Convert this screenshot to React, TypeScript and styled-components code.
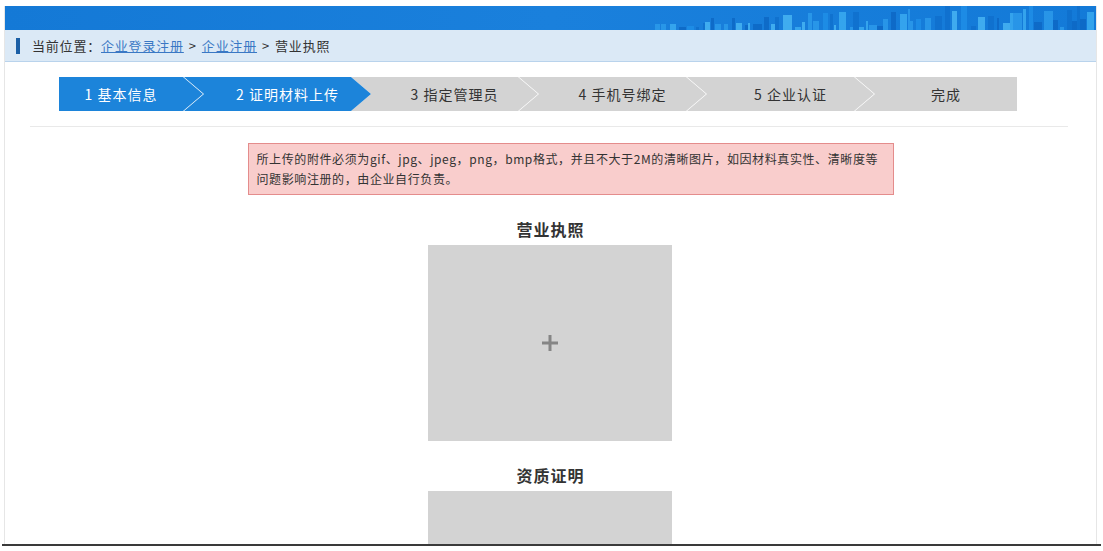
import * as React from "react";
import styled, { createGlobalStyle } from "styled-components";

const GlobalStyle = createGlobalStyle`
    html, body {
        margin: 0;
        padding: 0;
        background: #fff;
        font-family: "Noto Sans CJK SC", "Noto Sans", "Liberation Sans", sans-serif;
        color: #333;
        overflow: hidden;
    }
`;

const Page = styled.div`
    margin: 6px 0 0 4px;
    width: 1093px;
    height: 560px;
    border-left: 1px solid #e6e6e6;
    border-right: 1px solid #e6e6e6;
    box-sizing: border-box;
`;

const Banner = styled.div`
    height: 24px;
    background: linear-gradient(90deg, #1479d6 0%, #1a80dc 50%, #137ad8 100%);
    overflow: hidden;
    & > svg {
        display: block;
    }
`;

const Crumbs = styled.div`
    height: 31px;
    background: #dbe9f6;
    border-bottom: 1px solid #b9d3ec;
    display: flex;
    align-items: center;
    padding-left: 11px;
    font-size: 13px;
    letter-spacing: 0.8px;
    color: #333;
`;

const Marker = styled.span`
    width: 4px;
    height: 16px;
    background: #1b5fa6;
    margin-right: 12px;
`;

const CrumbLink = styled.a`
    color: #3a78c4;
    text-decoration: underline;
    cursor: pointer;
`;

const Sep = styled.span`
    margin: 0 5px;
`;

const Steps = styled.div`
    display: flex;
    margin: 15px 0 0 54px;
    height: 34px;
`;

const Step = styled.div<{ $w: number; $active: boolean; $kind: "first" | "mid" | "last"; $joined: boolean }>`
    width: ${(p) => p.$w}px;
    flex: none;
    height: 100%;
    margin-left: ${(p) => (p.$kind === "first" ? 0 : p.$joined ? -20 : -19)}px;
    padding-left: ${(p) => (p.$kind === "first" ? 0 : 20)}px;
    padding-right: ${(p) => (p.$kind === "first" ? 20 : 0)}px;
    box-sizing: border-box;
    background: ${(p) => (p.$active ? "#1c84da" : "#d3d3d3")};
    color: ${(p) => (p.$active ? "#fff" : "#333")};
    font-size: 14px;
    letter-spacing: 1px;
    display: flex;
    align-items: center;
    justify-content: center;
    position: relative;
    z-index: ${(p) => (p.$active ? 2 : 1)};
    clip-path: ${(p) =>
        p.$kind === "first"
            ? "polygon(0 0, calc(100% - 20px) 0, 100% 50%, calc(100% - 20px) 100%, 0 100%)"
            : p.$kind === "last"
            ? "polygon(0 0, 100% 0, 100% 100%, 0 100%, 20px 50%)"
            : "polygon(0 0, calc(100% - 20px) 0, 100% 50%, calc(100% - 20px) 100%, 0 100%, 20px 50%)"};
`;

const Divider = styled.div`
    margin: 15px 28px 0 25px;
    border-top: 1px solid #e9e9e9;
`;

const Body = styled.div`
    display: flex;
    flex-direction: column;
    align-items: center;
    padding-top: 16px;
`;

const Notice = styled.div`
    width: 646px;
    box-sizing: border-box;
    background: #f9cdcc;
    border: 1px solid #e48c8c;
    padding: 5px 2px 5px 8px;
    font-size: 12px;
    letter-spacing: 0.6px;
    line-height: 20px;
    color: #333;
    margin-left: 40px;
`;

const Section = styled.div`
    margin-top: 24px;
    display: flex;
    flex-direction: column;
    align-items: center;
`;

const SectionTitle = styled.div`
    font-size: 16px;
    font-weight: bold;
    letter-spacing: 1px;
    line-height: 20px;
    color: #333;
    margin-bottom: 6px;
`;

const UploadBox = styled.div`
    width: 244px;
    height: 196px;
    background: #d3d3d3;
    display: flex;
    align-items: center;
    justify-content: center;
    margin-left: -1px;
    cursor: pointer;
`;

const BottomEdge = styled.div`
    position: fixed;
    left: 2px;
    right: 2px;
    bottom: 0;
    height: 5px;
    background: #fff;
    border-top: 2px solid #3a3a3a;
`;

const steps = [
    { label: "1 基本信息", w: 144, active: true },
    { label: "2 证明材料上传", w: 187, active: true },
    { label: "3 指定管理员", w: 187, active: false },
    { label: "4 手机号绑定", w: 187, active: false },
    { label: "5 企业认证", w: 187, active: false },
    { label: "完成", w: 162, active: false },
];

// skyline-ish stripes on the right side of the banner
const bars = (() => {
    const out: { x: number; w: number; h: number; c: string }[] = [];
    const cols = ["#2b9aea", "#3aaaf0", "#0d67c4", "#1f8ee6", "#47b4f2", "#0f70cc"];
    let seed = 7;
    const rnd = () => {
        seed = (seed * 9301 + 49297) % 233280;
        return seed / 233280;
    };
    let x = 650;
    while (x < 1093) {
        const w = 2 + Math.floor(rnd() * 8);
        const t = (x - 650) / 440;
        const h = Math.min(24, 3 + Math.floor(rnd() * 26 * (0.25 + t)));
        out.push({ x, w, h, c: cols[Math.floor(rnd() * cols.length)] });
        x += w + Math.floor(rnd() * 5);
    }
    return out;
})();

const PlusIcon = () => (
    <svg width="18" height="18" viewBox="0 0 18 18">
        <rect x="7.5" y="1" width="3" height="16" fill="#858585" />
        <rect x="1" y="7.5" width="16" height="3" fill="#858585" />
    </svg>
);

export default function App() {
    return (
        <>
            <GlobalStyle />
            <Page>
                <Banner>
                    <svg width="1093" height="24">
                        {bars.map((b, i) => (
                            <rect key={i} x={b.x} y={24 - b.h} width={b.w} height={b.h} fill={b.c} opacity={0.85} />
                        ))}
                    </svg>
                </Banner>
                <Crumbs>
                    <Marker />
                    <span>当前位置：</span>
                    <CrumbLink>企业登录注册</CrumbLink>
                    <Sep>&gt;</Sep>
                    <CrumbLink>企业注册</CrumbLink>
                    <Sep>&gt;</Sep>
                    <span>营业执照</span>
                </Crumbs>
                <Steps>
                    {steps.map((s, i) => (
                        <Step
                            key={s.label}
                            $w={s.w}
                            $active={s.active}
                            $kind={i === 0 ? "first" : i === steps.length - 1 ? "last" : "mid"}
                            $joined={i > 0 && steps[i - 1].active && !s.active}
                        >
                            {s.label}
                        </Step>
                    ))}
                </Steps>
                <Divider />
                <Body>
                    <Notice>
                        所上传的附件必须为gif、jpg、jpeg，png，bmp格式，并且不大于2M的清晰图片，如因材料真实性、清晰度等问题影响注册的，由企业自行负责。
                    </Notice>
                    <Section>
                        <SectionTitle>营业执照</SectionTitle>
                        <UploadBox>
                            <PlusIcon />
                        </UploadBox>
                    </Section>
                    <Section>
                        <SectionTitle>资质证明</SectionTitle>
                        <UploadBox />
                    </Section>
                </Body>
            </Page>
            <BottomEdge />
        </>
    );
}
